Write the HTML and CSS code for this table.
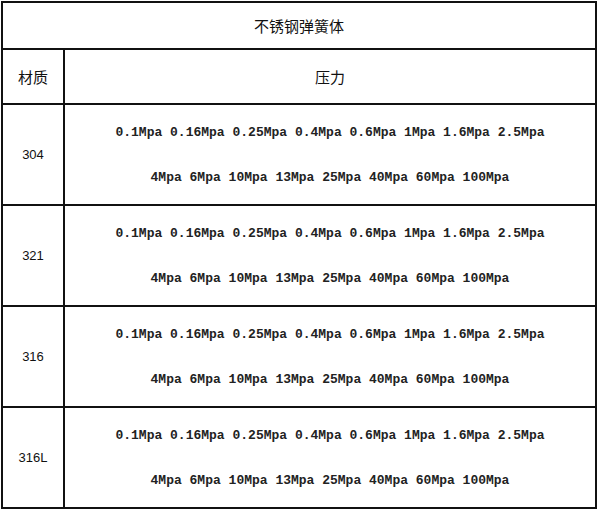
FILE: index.html
```html
<!DOCTYPE html>
<html lang="zh">
<head>
<meta charset="utf-8">
<title>不锈钢弹簧体</title>
<link rel="stylesheet" href="styles.css">
</head>
<body>
<div class="table">
  <div class="cell title cjk">不锈钢弹簧体</div>
  <div class="cell label cjk">材质</div>
  <div class="cell label cjk">压力</div>

  <div class="cell label">304</div>
  <div class="cell values">
    <div class="line">0.1Mpa 0.16Mpa 0.25Mpa 0.4Mpa 0.6Mpa 1Mpa 1.6Mpa 2.5Mpa</div>
    <div class="line">4Mpa 6Mpa 10Mpa 13Mpa 25Mpa 40Mpa 60Mpa 100Mpa</div>
  </div>

  <div class="cell label">321</div>
  <div class="cell values">
    <div class="line">0.1Mpa 0.16Mpa 0.25Mpa 0.4Mpa 0.6Mpa 1Mpa 1.6Mpa 2.5Mpa</div>
    <div class="line">4Mpa 6Mpa 10Mpa 13Mpa 25Mpa 40Mpa 60Mpa 100Mpa</div>
  </div>

  <div class="cell label">316</div>
  <div class="cell values">
    <div class="line">0.1Mpa 0.16Mpa 0.25Mpa 0.4Mpa 0.6Mpa 1Mpa 1.6Mpa 2.5Mpa</div>
    <div class="line">4Mpa 6Mpa 10Mpa 13Mpa 25Mpa 40Mpa 60Mpa 100Mpa</div>
  </div>

  <div class="cell label">316L</div>
  <div class="cell values">
    <div class="line">0.1Mpa 0.16Mpa 0.25Mpa 0.4Mpa 0.6Mpa 1Mpa 1.6Mpa 2.5Mpa</div>
    <div class="line">4Mpa 6Mpa 10Mpa 13Mpa 25Mpa 40Mpa 60Mpa 100Mpa</div>
  </div>
</div>
</body>
</html>
```

FILE: styles.css
```css
html, body {
  margin: 0;
  padding: 0;
  background: #fff;
}

body {
  padding: 1px;
  font-family: "Liberation Sans", "Noto Sans CJK SC", sans-serif;
  font-size: 13px;
  color: #111;
}

.table {
  width: 592px;
  border: 2px solid #111;
  background: #111;
  display: grid;
  grid-template-columns: 60px 530px;
  grid-template-rows: 45px 53px 99px 99px 99px 99px;
  gap: 2px;
}

.cell {
  background: #fff;
  display: flex;
  align-items: center;
  justify-content: center;
}

.title {
  grid-column: 1 / -1;
}

.cjk {
  font-family: "Noto Sans CJK SC", sans-serif;
  font-size: 15px;
}

.values {
  flex-direction: column;
  font-family: "Liberation Mono", monospace;
  font-weight: bold;
  font-size: 13px;
  color: #222;
}

.line {
  line-height: 45px;
  white-space: pre;
}
```
